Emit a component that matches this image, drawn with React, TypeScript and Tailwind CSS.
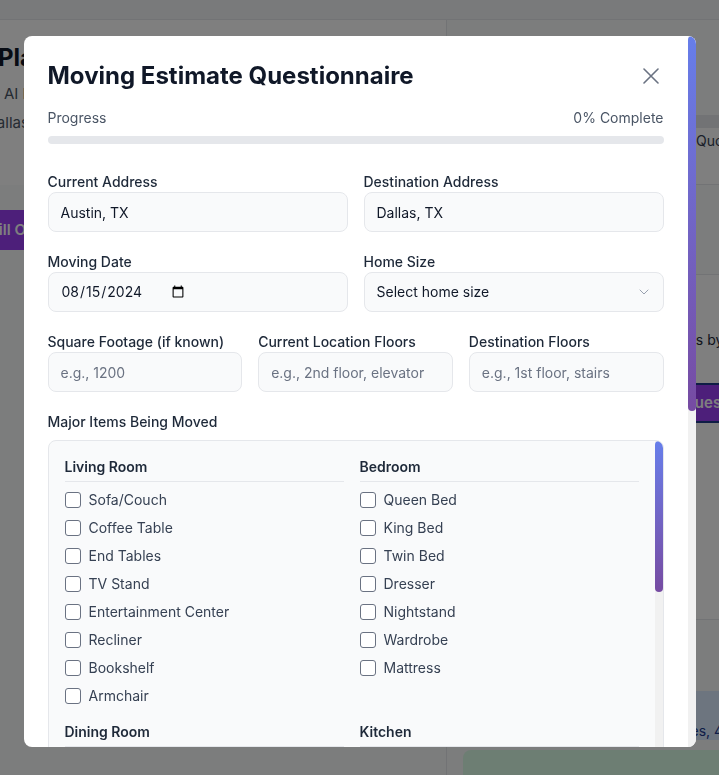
import React, { useState } from 'react';
import { ChevronDown } from 'lucide-react';

const sections: { title: string; items: string[] }[] = [
  {
    title: 'Living Room',
    items: ['Sofa/Couch', 'Coffee Table', 'End Tables', 'TV Stand', 'Entertainment Center', 'Recliner', 'Bookshelf', 'Armchair'],
  },
  {
    title: 'Bedroom',
    items: ['Queen Bed', 'King Bed', 'Twin Bed', 'Dresser', 'Nightstand', 'Wardrobe', 'Mattress'],
  },
  {
    title: 'Dining Room',
    items: ['Dining Table', 'Dining Chairs', 'China Cabinet', 'Buffet/Sideboard', 'Bar Stools'],
  },
  {
    title: 'Kitchen',
    items: ['Refrigerator', 'Stove/Range', 'Dishwasher', 'Microwave', 'Kitchen Table', 'Pantry Shelving'],
  },
  {
    title: 'Office',
    items: ['Desk', 'Office Chair', 'Filing Cabinet', 'Computer/Monitor', 'Bookcase'],
  },
  {
    title: 'Garage/Outdoor',
    items: ['Washer', 'Dryer', 'Lawn Mower', 'Grill', 'Bicycle', 'Patio Furniture', 'Tool Chest'],
  },
];

const inputCls =
  'w-full h-10 rounded-lg border border-gray-200 bg-gray-50 px-3 text-sm text-gray-900 placeholder:text-gray-500 focus:outline-none';

function Field({ label, children }: { label: string; children: React.ReactNode }) {
  return (
    <div>
      <label className="block text-sm font-medium leading-5 text-gray-800">{label}</label>
      {children}
    </div>
  );
}

// scrollbar look-alike: track + gradient thumb
function ScrollTrack({ thumb }: { thumb: string }) {
  return (
    <div className="w-2 shrink-0 bg-[#f1f1f1]">
      <div className={`${thumb} w-2 rounded-full bg-gradient-to-b from-[#667eea] to-[#764ba2]`} />
    </div>
  );
}

function Background() {
  return (
    <div className="h-screen overflow-hidden bg-gray-50 font-['Inter',sans-serif]">
      <div className="h-5 border-b border-gray-200 bg-gray-100" />
      <div className="flex">
        <div className="h-[760px] w-[447px] shrink-0 border-r border-gray-200">
          <div className="h-[165px] bg-white pt-[22px]">
            <h1 className="-ml-[2px] whitespace-nowrap text-2xl font-bold text-gray-900">Plan Your Move</h1>
            <p className="mt-[9px] whitespace-nowrap pl-1 text-[15px] text-gray-600">AI Powered Moving Assistant</p>
            <p className="-ml-[14px] mt-[6px] whitespace-nowrap text-[15px] text-gray-600">Dallas, TX · Aug 15</p>
          </div>
          <div className="pt-[25px]">
            <button className="-ml-[18px] h-10 whitespace-nowrap rounded-r-lg bg-[#9a3ff5] px-2 text-[15px] font-semibold text-white">
              Fill Out Questionnaire
            </button>
          </div>
        </div>
        <div className="flex-1 pl-4">
          <div className="mt-[95px] h-[70px] border-y border-gray-200 bg-white">
            <div className="h-3 bg-gray-200" />
            <p className="mt-[3px] whitespace-nowrap pl-[233px] text-sm text-gray-700">Quotes</p>
          </div>
          <div className="h-[90px] border-b border-gray-200" />
          <div className="h-[345px] border-b border-gray-200 bg-white pt-[55px]">
            <p className="whitespace-nowrap pl-[204px] text-sm text-gray-800">Items by room</p>
            <button className="ml-[190px] mt-[33px] h-10 whitespace-nowrap rounded-lg border-2 border-[#1e3a8a] bg-[#9a3ff5] px-3 text-[15px] font-semibold text-white">
              Request Quotes
            </button>
          </div>
          <div className="mt-[71px] h-[49px] whitespace-nowrap rounded-lg bg-blue-100 pl-[203px] pt-[30px] text-sm text-blue-900">
            Boxes, 4 rooms
          </div>
          <div className="mt-[10px] h-[40px] rounded-lg bg-green-100" />
        </div>
      </div>
    </div>
  );
}

export default function App() {
  const [checked, setChecked] = useState<Record<string, boolean>>({});

  return (
    <div className="relative font-['Inter',sans-serif]">
      <Background />
      <div className="fixed inset-0 z-50 flex justify-center bg-black/50">
        <div className="mt-[36px] flex h-[711px] w-[672px] overflow-hidden rounded-lg bg-white">
          <div className="min-w-0 flex-1 p-6">
            <div className="mb-4 flex items-center justify-between">
              <h2 className="text-2xl font-bold text-gray-900">Moving Estimate Questionnaire</h2>
              <button className="mr-[5px] text-gray-500" aria-label="Close">
                <svg width="16" height="16" viewBox="0 0 16 16" fill="none" stroke="currentColor" strokeWidth="1.6" strokeLinecap="round">
                  <path d="M1 1l14 14M15 1L1 15" />
                </svg>
              </button>
            </div>

            <div className="mb-7">
              <div className="mb-2 flex justify-between text-sm text-gray-600">
                <span>Progress</span>
                <span>0% Complete</span>
              </div>
              <div className="h-2 rounded-full bg-gray-200">
                <div className="h-2 w-0 rounded-full bg-purple-600" />
              </div>
            </div>

            <div className="space-y-5">
              <div className="grid grid-cols-2 gap-4">
                <Field label="Current Address">
                  <input className={inputCls} defaultValue="Austin, TX" />
                </Field>
                <Field label="Destination Address">
                  <input className={inputCls} defaultValue="Dallas, TX" />
                </Field>
              </div>

              <div className="grid grid-cols-2 gap-4">
                <Field label="Moving Date">
                  <input type="date" className={`${inputCls} [&::-webkit-datetime-edit]:flex-none`} defaultValue="2024-08-15" />
                </Field>
                <Field label="Home Size">
                  <div className="relative">
                    <select className={`${inputCls} appearance-none text-gray-500`} defaultValue="">
                      <option value="">Select home size</option>
                      <option>Studio</option>
                      <option>1 Bedroom</option>
                      <option>2 Bedrooms</option>
                      <option>3 Bedrooms</option>
                      <option>4+ Bedrooms</option>
                    </select>
                    <ChevronDown size={16} strokeWidth={1.5} className="pointer-events-none absolute right-3 top-3 text-gray-400" />
                  </div>
                </Field>
              </div>

              <div className="grid grid-cols-3 gap-4">
                <Field label="Square Footage (if known)">
                  <input className={inputCls} placeholder="e.g., 1200" />
                </Field>
                <Field label="Current Location Floors">
                  <input className={inputCls} placeholder="e.g., 2nd floor, elevator" />
                </Field>
                <Field label="Destination Floors">
                  <input className={inputCls} placeholder="e.g., 1st floor, stairs" />
                </Field>
              </div>

              <div>
                <label className="mb-2 block text-sm font-medium leading-5 text-gray-800">Major Items Being Moved</label>
                <div className="flex h-96 overflow-hidden rounded-lg border border-gray-200 bg-gray-50">
                  <div className="min-w-0 flex-1 p-4">
                    <div className="grid grid-cols-2 gap-4">
                      {sections.map((s) => (
                        <div key={s.title}>
                          <h4 className="mb-2 border-b border-gray-200 pb-1 text-sm font-semibold text-gray-800">{s.title}</h4>
                          <div className="space-y-2">
                            {s.items.map((item) => (
                              <label key={item} className="flex items-center gap-2 text-sm text-gray-700">
                                <input
                                  type="checkbox"
                                  checked={!!checked[item]}
                                  onChange={() => setChecked((c) => ({ ...c, [item]: !c[item] }))}
                                  className="h-4 w-4 shrink-0 appearance-none rounded-[3px] border border-gray-500 bg-white checked:bg-purple-600"
                                />
                                {item}
                              </label>
                            ))}
                          </div>
                        </div>
                      ))}
                    </div>
                  </div>
                  <ScrollTrack thumb="h-[151px]" />
                </div>
              </div>

              <Field label="Special Items or Concerns">
                <textarea className={`${inputCls} h-24 py-2`} placeholder="Fragile items, antiques, access issues..." />
              </Field>
            </div>
          </div>
          <ScrollTrack thumb="h-[375px]" />
        </div>
      </div>
    </div>
  );
}
